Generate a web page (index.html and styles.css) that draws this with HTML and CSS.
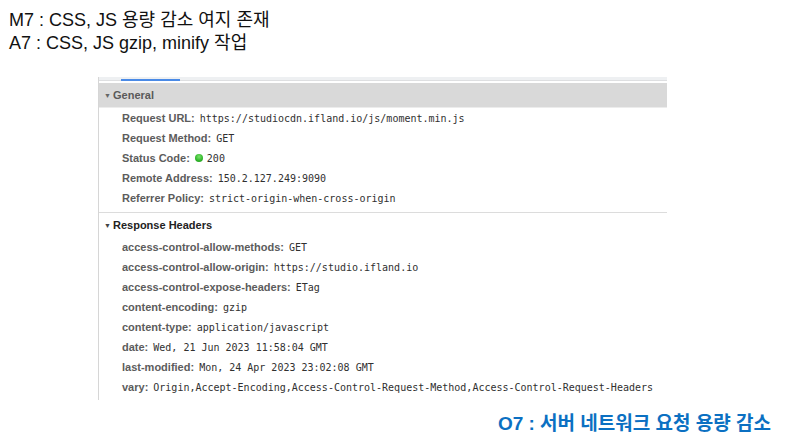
FILE: index.html
```html
<!DOCTYPE html>
<html lang="ko">
<head>
<meta charset="utf-8">
<link rel="stylesheet" href="styles.css">
</head>
<body>
<div class="notes">
  <div>M7 : CSS, JS 용량 감소 여지 존재</div>
  <div>A7 : CSS, JS gzip, minify 작업</div>
</div>
<div class="panel">
  <div class="tabs"><div class="tab-active"></div></div>
  <div class="section general">
    <div class="sec-head gray"><span class="tri">▼</span>General</div>
    <div class="row"><span class="k">Request URL:</span><span class="v">https://studiocdn.ifland.io/js/moment.min.js</span></div>
    <div class="row"><span class="k">Request Method:</span><span class="v">GET</span></div>
    <div class="row"><span class="k">Status Code:</span><span class="dot"></span><span class="v">200</span></div>
    <div class="row"><span class="k">Remote Address:</span><span class="v">150.2.127.249:9090</span></div>
    <div class="row"><span class="k">Referrer Policy:</span><span class="v">strict-origin-when-cross-origin</span></div>
  </div>
  <div class="section">
    <div class="sec-head dark"><span class="tri">▼</span>Response Headers</div>
    <div class="row"><span class="k">access-control-allow-methods:</span><span class="v">GET</span></div>
    <div class="row"><span class="k">access-control-allow-origin:</span><span class="v">https://studio.ifland.io</span></div>
    <div class="row"><span class="k">access-control-expose-headers:</span><span class="v">ETag</span></div>
    <div class="row"><span class="k">content-encoding:</span><span class="v">gzip</span></div>
    <div class="row"><span class="k">content-type:</span><span class="v">application/javascript</span></div>
    <div class="row"><span class="k">date:</span><span class="v">Wed, 21 Jun 2023 11:58:04 GMT</span></div>
    <div class="row"><span class="k">last-modified:</span><span class="v">Mon, 24 Apr 2023 23:02:08 GMT</span></div>
    <div class="row"><span class="k">vary:</span><span class="v">Origin,Accept-Encoding,Access-Control-Request-Method,Access-Control-Request-Headers</span></div>
  </div>
</div>
<div class="outcome">O7 : 서버 네트워크 요청 용량 감소</div>
</body>
</html>
```
FILE: styles.css
```css
html, body {
  margin: 0;
  padding: 0;
  background: #ffffff;
}
body {
  font-family: "Liberation Sans", Arial, "Noto Sans CJK KR", sans-serif;
  color: #000;
}
.notes {
  padding: 9px 0 0 9px;
  font-size: 18px;
  line-height: 23px;
  color: #111;
}
.panel {
  margin: 22px 0 0 98px;
  width: 568px;
  border-left: 1px solid #d6d6d6;
  padding-bottom: 3px;
}
.tabs {
  height: 3px;
  background: #eef0f2;
  border-bottom: 1px solid #dedfe1;
  padding-left: 22px;
  display: flex;
  align-items: flex-end;
}
.tab-active {
  width: 59px;
  height: 2px;
  background: #4a8ae6;
  margin-bottom: -1px;
}
.section {
  font-size: 11px;
}
.general {
  margin-top: 2px;
  padding-bottom: 4px;
  border-bottom: 1px solid #dcdcdc;
}
.sec-head {
  display: flex;
  align-items: center;
  font-weight: bold;
  padding-left: 5px;
}
.sec-head.gray {
  height: 24px;
  background: #d9d9d9;
  border-bottom: 1px solid #ececec;
  color: #5a5a5a;
}
.sec-head.dark {
  height: 24px;
  color: #222;
}
.tri {
  font-size: 7px;
  width: 9px;
  color: #666;
}
.dark .tri {
  color: #444;
}
.row {
  display: flex;
  align-items: center;
  height: 20px;
  padding-left: 23px;
  white-space: nowrap;
}
.k {
  font-weight: bold;
  color: #5c5c5c;
  margin-right: 5px;
}
.v {
  font-family: "DejaVu Sans Mono", monospace;
  font-size: 10px;
  color: #303030;
}
.dot {
  width: 8px;
  height: 8px;
  border-radius: 50%;
  background: radial-gradient(circle at 50% 35%, #7be36b 0%, #2fb52a 60%, #1e8f1c 100%);
  margin-right: 4px;
}
.outcome {
  display: flex;
  justify-content: flex-end;
  padding-right: 19px;
  margin-top: 12px;
  font-size: 19px;
  line-height: 24px;
  font-weight: bold;
  color: #0b70c2;
}
```
